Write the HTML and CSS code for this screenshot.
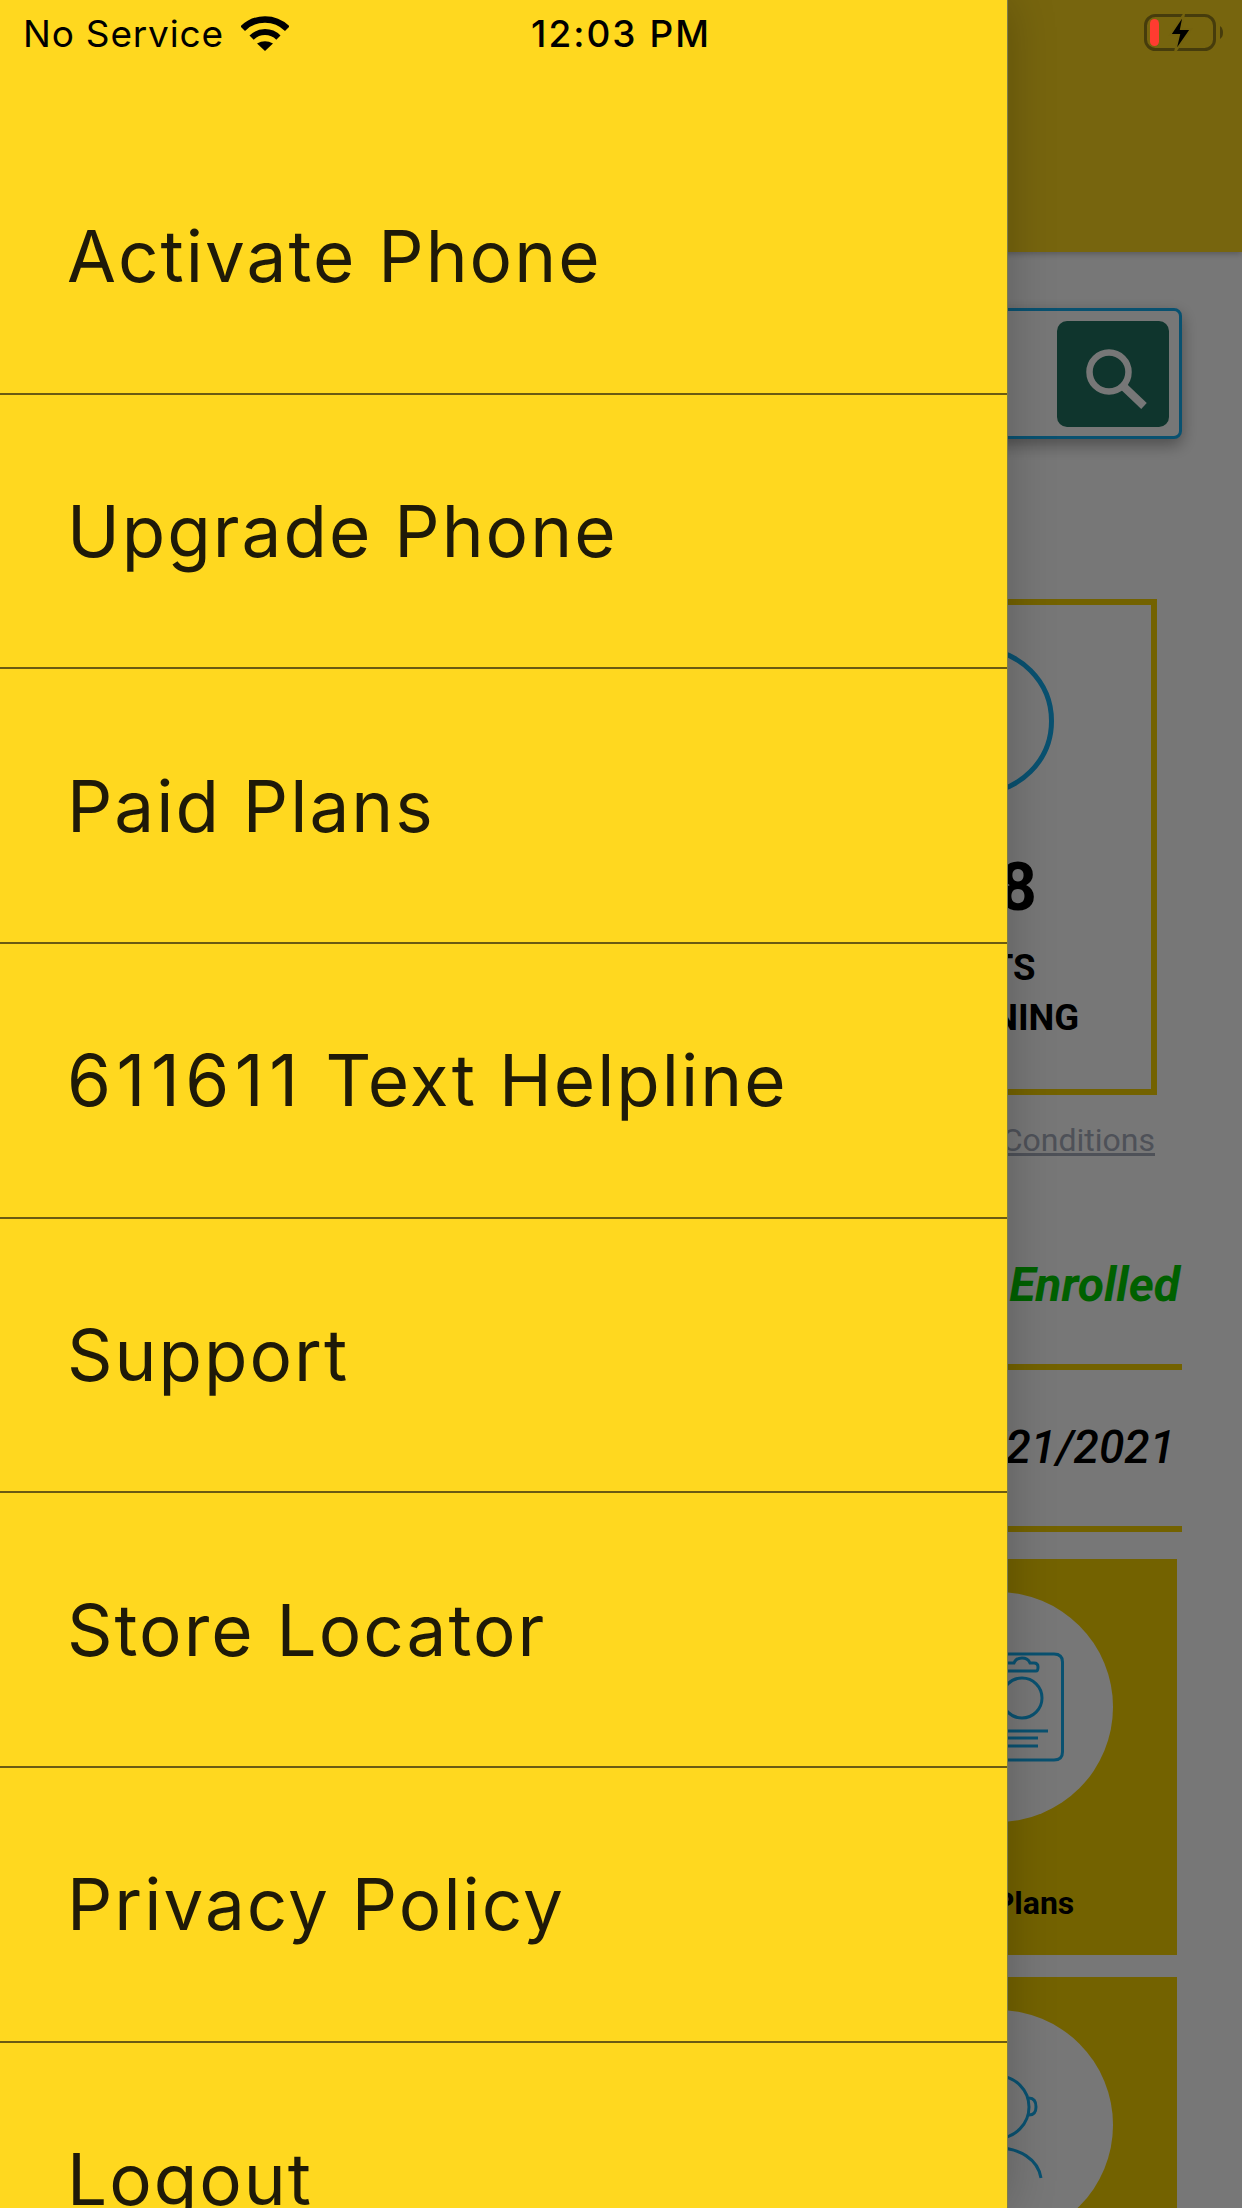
FILE: index.html
```html
<!DOCTYPE html>
<html lang="en">
<head>
<meta charset="utf-8">
<title>Menu</title>
<link rel="stylesheet" href="styles.css">
</head>
<body>
<div class="screen">
  <main class="page">
    <header class="appbar"></header>
    <div class="search">
      <button class="search-btn" type="button" aria-label="Search">
        <svg class="search-icon" width="70" height="70" viewBox="0 0 70 70"><circle cx="24" cy="24" r="19.5" fill="none" stroke="#fff" stroke-width="6.5"/><path d="M38 38 L59 58" stroke="#fff" stroke-width="8" fill="none"/></svg>
      </button>
    </div>
    <section class="usage">
      <div class="ring"></div>
      <div class="usage-num">128</div>
      <div class="usage-label">TEXTS<br>REMAINING</div>
    </section>
    <a class="terms">Terms &amp; Conditions</a>
    <div class="status-row enrolled">Enrolled</div>
    <div class="status-row date">09/21/2021</div>
    <section class="tile">
      <div class="tile-circle">
        <svg width="132" height="110" viewBox="0 0 132 110" fill="none" stroke="#14aeef" stroke-width="3">
          <path d="M10 2 H122 Q130.500 2 130.500 10 V100 Q130.500 108 122 108 H10"/>
          <circle cx="90" cy="46" r="20"/>
          <path d="M50 19 H104 Q106 19 106 15 Q106 11 102 11 H98 Q96 6 90 6 Q84 6 82 11 H50"/>
          <path d="M40 79 H116 M40 86 H106 M40 94 H106"/>
        </svg>
      </div>
      <div class="tile-label">Paid Plans</div>
    </section>
    <section class="tile">
      <div class="tile-circle">
        <svg width="132" height="132" viewBox="0 0 132 132" fill="none" stroke="#14aeef" stroke-width="3">
          <circle cx="66" cy="48" r="31"/>
          <path d="M97 39 Q104 39 104 48 Q104 56 97 56"/>
          <path d="M23 119 C26 100 45 89 66 89 C87 89 106 100 109 119"/>
        </svg>
      </div>
    </section>
  </main>
  <div class="scrim"></div>
  <nav class="drawer">
    <a class="item">Activate Phone</a>
    <a class="item">Upgrade Phone</a>
    <a class="item">Paid Plans</a>
    <a class="item"><span class="digits">611611</span>&nbsp;Text Helpline</a>
    <a class="item">Support</a>
    <a class="item">Store Locator</a>
    <a class="item">Privacy Policy</a>
    <a class="item">Logout</a>
  </nav>
  <div class="statusbar">
    <div class="sb-left">
      <span>No Service</span>
      <svg class="wifi" width="48" height="36" viewBox="0 0 48 36" fill="none" stroke="#000">
        <path d="M1.700 13.700 A31.500 31.500 0 0 1 46.300 13.700" stroke-width="6.500"/>
        <path d="M10.600 22.600 A19 19 0 0 1 37.400 22.600" stroke-width="6"/>
        <path d="M24 36 L16 28.500 Q24 24 32 28.500 Z" fill="#000" stroke="none"/>
      </svg>
    </div>
    <div class="sb-time">12:03 PM</div>
    <div class="sb-right">
      <svg width="80" height="38" viewBox="0 0 80 38">
        <rect x="1.500" y="1.500" width="69" height="34" rx="10" fill="none" stroke="#463c0c" stroke-width="3"/>
        <path d="M76 12 Q79 14 79 18.500 Q79 23 76 25 Z" fill="#463c0c"/>
        <rect x="6" y="5" width="9" height="27" rx="4.500" fill="#ff3b30"/>
        <path d="M40 0 L26 21 H35 L31 38 L47 15 H37 Z" fill="#000" stroke="#75630e" stroke-width="2"/>
      </svg>
    </div>
  </div>
</div>
</body>
</html>
```
FILE: styles.css
```css
* { box-sizing: border-box; }
html, body { margin: 0; padding: 0; }
body { width: 1242px; height: 2208px; overflow: hidden; background: #fff; }
.screen { position: relative; width: 1242px; height: 2208px; overflow: hidden; font-family: Roboto, sans-serif; }

.page { display: flex; flex-direction: column; align-items: flex-end; height: 2208px; overflow: hidden; background: #fff; }
.appbar { align-self: stretch; flex: none; height: 252px; background: #ffd81f; box-shadow: 0 2px 6px rgba(0,0,0,.25); }

.search { flex: none; display: flex; justify-content: flex-end; align-items: center; width: 1142px; height: 131px; margin: 56px 60px 0 0; padding-right: 10px; background: #fff; border: 3px solid #14aeef; border-radius: 8px; box-shadow: 0 6px 16px rgba(0,0,0,.35); }
.search-btn { display: flex; align-items: center; justify-content: center; width: 112px; height: 106px; padding: 0; border: 0; border-radius: 10px; background: #207360; }
.search-icon { display: block; margin: 18px 0 0 14px; }

.usage { flex: none; display: flex; flex-direction: column; align-items: center; width: 354px; height: 496px; margin: 160px 85px 0 0; padding-top: 42px; border: 6px solid #f7d300; }
.ring { flex: none; width: 148px; height: 148px; border: 5px solid #14aeef; border-radius: 50%; }
.usage-num { margin-top: 55px; font-size: 66px; line-height: 76px; font-weight: 700; color: #000; }
.usage-label { margin-top: 17px; font-size: 36.500px; line-height: 50px; font-weight: 700; color: #000; text-align: center; }

.terms { flex: none; margin: 26px 87px 0 0; font-size: 32px; line-height: 38px; color: #a8adbd; text-decoration: underline; }

.status-row { flex: none; width: 700px; margin-right: 60px; text-align: right; font-style: italic; }
.enrolled { height: 211px; padding: 100px 2px 0 0; font-size: 48px; line-height: 52px; font-weight: 700; color: #00ce00; border-bottom: 6px solid #f7d300; }
.date { height: 162px; padding: 51px 7px 0 0; font-size: 46px; line-height: 52px; font-weight: 500; color: #000; border-bottom: 6px solid #f7d300; }

.tile { flex: none; display: flex; flex-direction: column; align-items: center; width: 358px; height: 396px; margin: 27px 65px 0 0; padding-top: 33px; background: #f7d300; }
.tile + .tile { margin-top: 22px; }
.tile-circle { flex: none; display: flex; align-items: center; justify-content: center; width: 230px; height: 230px; border-radius: 50%; background: #fff; }
.tile-label { margin-top: 62px; font-size: 32px; line-height: 38px; font-weight: 700; color: #000; }

.scrim { position: absolute; inset: 0; background: rgba(0,0,0,.535); }

.drawer { position: absolute; top: 0; left: 0; bottom: 0; width: 1008px; padding-top: 120px; overflow: hidden; background: #ffd81f; border-right: 1px solid rgba(20,50,110,.55); box-shadow: 0 0 45px rgba(0,0,0,.22); font-family: Inter, sans-serif; }
.item { display: flex; align-items: center; height: 274.67px; padding-left: 67px; font-size: 71px; letter-spacing: 2px; color: #1f1a08; border-bottom: 2px solid #6b5a12; white-space: pre; }
.digits { letter-spacing: 5.500px; }

.statusbar { position: absolute; top: 0; left: 0; right: 0; display: grid; grid-template-columns: 1fr auto 1fr; align-items: center; height: 66px; padding: 0 18px; font-family: Inter, sans-serif; font-size: 37px; color: #000; }
.sb-left { display: flex; align-items: center; gap: 17px; padding-left: 5px; letter-spacing: .8px; }
.wifi { display: block; }
.sb-time { font-weight: 500; letter-spacing: 2px; }
.sb-right { display: flex; justify-content: flex-end; }
```
